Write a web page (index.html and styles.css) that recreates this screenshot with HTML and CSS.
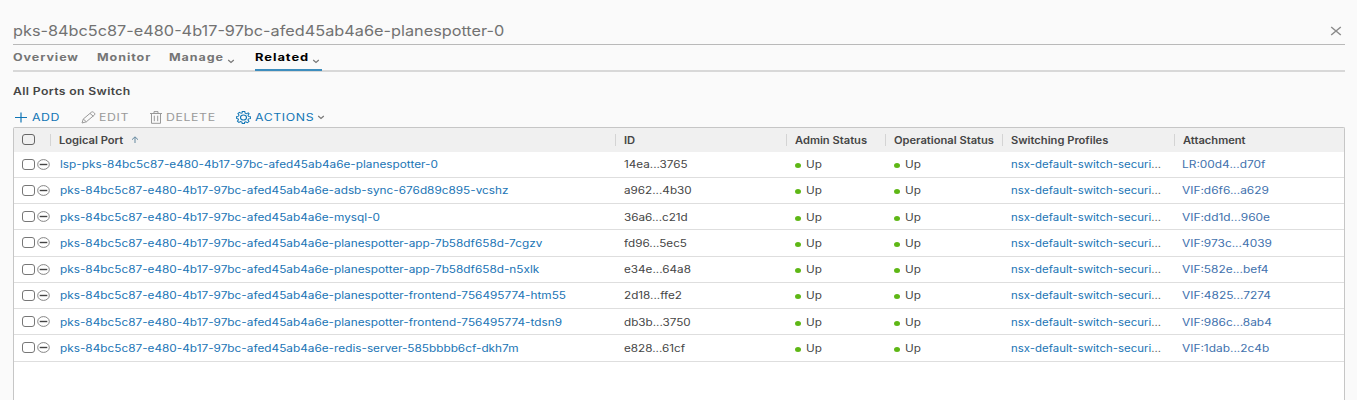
FILE: index.html
```
<!DOCTYPE html>
<html lang="en">
<head>
<meta charset="utf-8">
<title>Logical switch ports</title>
<link rel="stylesheet" href="styles.css">
</head>
<body>
<svg width="0" height="0" class="defs">
  <symbol id="minus" viewBox="0 0 13 11"><ellipse cx="6.5" cy="5.5" rx="5.8" ry="4.9" fill="#fff" stroke="#777" stroke-width=".9"/><path d="M2.7 5.5h7.6" stroke="#444" stroke-width="1.4"/></symbol>
  <symbol id="caret" viewBox="0 0 8 5"><path d="M1.200 1l2.800 2.500L6.800 1" fill="none" stroke="currentColor" stroke-width="1.2"/></symbol>
</svg>
<main class="page">
  <header class="title-bar">
    <h1 class="title"><span class="t">pks-84bc5c87-e480-4b17-97bc-afed45ab4a6e-planespotter-0</span></h1>
    <svg class="close" viewBox="0 0 12 10"><path d="M1.200 1l9.600 8M10.800 1L1.200 9" stroke="#8c8c8c" stroke-width="1.5"/></svg>
  </header>
  <nav class="tabs">
    <a class="tab overview"><span class="t">Overview</span></a>
    <a class="tab monitor"><span class="t">Monitor</span></a>
    <a class="tab manage"><span class="t">Manage</span><svg class="caret"><use href="#caret"/></svg></a>
    <a class="tab related"><span class="t">Related</span><svg class="caret"><use href="#caret"/></svg></a>
  </nav>
  <h2 class="section"><span class="t">All Ports on Switch</span></h2>
  <div class="toolbar">
    <a class="action add"><svg viewBox="0 0 12 10"><path d="M0 5h12M6 0v10" fill="none" stroke="currentColor" stroke-width="1.2"/></svg><span class="t">ADD</span></a>
    <a class="action edit off"><svg viewBox="0 0 15 13"><path d="M1 12l1.3-4L10.4 1.2Q11.4.4 12.5 1.3l1 .8q1 .9 0 1.8L5.3 10.8zM9 2.4l3.3 2.9M2.3 8l3 2.8" fill="none" stroke="currentColor"/></svg><span class="t">EDIT</span></a>
    <a class="action delete off"><svg viewBox="0 0 12 13"><path d="M0 2.5h12M4 2.3V.6h4v1.7M1.5 2.5v9.8h9V2.5M4.3 4.7v5.5M7.7 4.7v5.5" fill="none" stroke="currentColor"/></svg><span class="t">DELETE</span></a>
    <a class="action more"><svg viewBox="0 0 24 24" preserveAspectRatio="none"><path d="M10 1h4l.7 3.2 2 .9L19.500 3.300l1.500 2-1.800 2.700.8 2L23 10.500v3.500l-3 .6-.9 2 1.700 2.800-2.500 2.300-2.700-1.800-2 .8L13.500 23h-3.500l-.6-2.600-2-.8-2.800 1.600-2.300-2.400 1.600-2.600-.8-2L1 13.700v-3.400l2.900-.7.9-2-1.700-2.700 2.400-2.300 2.700 1.700 1.600-.7z" fill="none" stroke="currentColor" stroke-width="1.700"/><circle cx="12" cy="12" r="4.800" fill="none" stroke="currentColor" stroke-width="1.800"/></svg><span class="t">ACTIONS</span><svg class="caret"><use href="#caret"/></svg></a>
  </div>
  <section class="grid">
    <div class="row head">
      <div class="cell select"><i class="box"></i></div>
      <div class="cell port"><span class="t">Logical Port</span><svg class="sort" viewBox="0 0 8 7"><path d="M4 7V1M1 3.700L4 .8l3 2.900" fill="none" stroke="#64889f"/></svg></div>
      <div class="cell"><span class="t">ID</span></div>
      <div class="cell"><span class="t">Admin Status</span></div>
      <div class="cell"><span class="t">Operational Status</span></div>
      <div class="cell"><span class="t">Switching Profiles</span></div>
      <div class="cell"><span class="t">Attachment</span></div>
    </div>
    <div class="row"><div class="cell select"><i class="box"></i><svg class="minus"><use href="#minus"/></svg></div><div class="cell link name"><span class="t">lsp-pks-84bc5c87-e480-4b17-97bc-afed45ab4a6e-planespotter-0</span></div><div class="cell"><span class="t">14ea...3765</span></div><div class="cell up"><span class="t">Up</span></div><div class="cell up"><span class="t">Up</span></div><div class="cell link profile"><span class="t">nsx-default-switch-securi<b>...</b></span></div><div class="cell link att"><span class="t">LR:00d4...d70f</span></div></div>
    <div class="row"><div class="cell select"><i class="box"></i><svg class="minus"><use href="#minus"/></svg></div><div class="cell link name"><span class="t">pks-84bc5c87-e480-4b17-97bc-afed45ab4a6e-adsb-sync-676d89c895-vcshz</span></div><div class="cell"><span class="t">a962...4b30</span></div><div class="cell up"><span class="t">Up</span></div><div class="cell up"><span class="t">Up</span></div><div class="cell link profile"><span class="t">nsx-default-switch-securi<b>...</b></span></div><div class="cell link att"><span class="t">VIF:d6f6...a629</span></div></div>
    <div class="row"><div class="cell select"><i class="box"></i><svg class="minus"><use href="#minus"/></svg></div><div class="cell link name"><span class="t">pks-84bc5c87-e480-4b17-97bc-afed45ab4a6e-mysql-0</span></div><div class="cell"><span class="t">36a6...c21d</span></div><div class="cell up"><span class="t">Up</span></div><div class="cell up"><span class="t">Up</span></div><div class="cell link profile"><span class="t">nsx-default-switch-securi<b>...</b></span></div><div class="cell link att"><span class="t">VIF:dd1d...960e</span></div></div>
    <div class="row"><div class="cell select"><i class="box"></i><svg class="minus"><use href="#minus"/></svg></div><div class="cell link name"><span class="t">pks-84bc5c87-e480-4b17-97bc-afed45ab4a6e-planespotter-app-7b58df658d-7cgzv</span></div><div class="cell"><span class="t">fd96...5ec5</span></div><div class="cell up"><span class="t">Up</span></div><div class="cell up"><span class="t">Up</span></div><div class="cell link profile"><span class="t">nsx-default-switch-securi<b>...</b></span></div><div class="cell link att"><span class="t">VIF:973c...4039</span></div></div>
    <div class="row"><div class="cell select"><i class="box"></i><svg class="minus"><use href="#minus"/></svg></div><div class="cell link name"><span class="t">pks-84bc5c87-e480-4b17-97bc-afed45ab4a6e-planespotter-app-7b58df658d-n5xlk</span></div><div class="cell"><span class="t">e34e...64a8</span></div><div class="cell up"><span class="t">Up</span></div><div class="cell up"><span class="t">Up</span></div><div class="cell link profile"><span class="t">nsx-default-switch-securi<b>...</b></span></div><div class="cell link att"><span class="t">VIF:582e...bef4</span></div></div>
    <div class="row"><div class="cell select"><i class="box"></i><svg class="minus"><use href="#minus"/></svg></div><div class="cell link name"><span class="t">pks-84bc5c87-e480-4b17-97bc-afed45ab4a6e-planespotter-frontend-756495774-htm55</span></div><div class="cell"><span class="t">2d18...ffe2</span></div><div class="cell up"><span class="t">Up</span></div><div class="cell up"><span class="t">Up</span></div><div class="cell link profile"><span class="t">nsx-default-switch-securi<b>...</b></span></div><div class="cell link att"><span class="t">VIF:4825...7274</span></div></div>
    <div class="row"><div class="cell select"><i class="box"></i><svg class="minus"><use href="#minus"/></svg></div><div class="cell link name"><span class="t">pks-84bc5c87-e480-4b17-97bc-afed45ab4a6e-planespotter-frontend-756495774-tdsn9</span></div><div class="cell"><span class="t">db3b...3750</span></div><div class="cell up"><span class="t">Up</span></div><div class="cell up"><span class="t">Up</span></div><div class="cell link profile"><span class="t">nsx-default-switch-securi<b>...</b></span></div><div class="cell link att"><span class="t">VIF:986c...8ab4</span></div></div>
    <div class="row"><div class="cell select"><i class="box"></i><svg class="minus"><use href="#minus"/></svg></div><div class="cell link name"><span class="t">pks-84bc5c87-e480-4b17-97bc-afed45ab4a6e-redis-server-585bbbb6cf-dkh7m</span></div><div class="cell"><span class="t">e828...61cf</span></div><div class="cell up"><span class="t">Up</span></div><div class="cell up"><span class="t">Up</span></div><div class="cell link profile"><span class="t">nsx-default-switch-securi<b>...</b></span></div><div class="cell link att"><span class="t">VIF:1dab...2c4b</span></div></div>
  </section>
</main>
</body>
</html>
```
FILE: styles.css
```
* { box-sizing: border-box; }
html, body { margin: 0; height: 400px; overflow: hidden; background: #fafafa; }
body { font: 10px/14px Inter, "Open Sans", sans-serif; color: #454545; }
.defs { display: block; }
.page { display: flex; flex-direction: column; height: 400px; padding: 17px 12px 0 13px; }
/* Wide letterforms: glyphs are stretched horizontally by --wide. */
.t { display: inline-block; white-space: nowrap; transform: scaleX(var(--wide, 1.1)); transform-origin: 0 50%; }
.title-bar { display: flex; justify-content: space-between; align-items: center; height: 28px; flex: none; border-bottom: 1px solid #b9b9b9; padding-right: 3px; }
.title { margin: 0; font-size: 14.5px; line-height: 20px; font-weight: 400; color: #727272; --wide: 1.1225; }
.close { width: 12px; height: 10px; }
.tabs { display: flex; height: 27px; flex: none; border-bottom: 2px solid #d8d8d8; }
.tab { display: flex; flex: none; height: 26px; padding-top: 4.5px; font-weight: 700; color: #757575; letter-spacing: .75px; --wide: 1.25; }
.tab .t { flex: 1; min-width: 0; width: 0; }
.overview { width: 84px; }
.monitor { width: 72px; }
.manage { width: 66px; margin-right: 20px; }
.related { width: 67px; color: #000; border-bottom: 2px solid #3d8dbd; --wide: 1.29; }
.caret { width: 8px; height: 5px; color: #777; flex: none; }
.tab .caret { margin-top: 9.500px; margin-right: 2px; }
.tab.manage .caret { margin-right: 0; }
.section { margin: 12px 0 0; font-size: 10px; line-height: 14px; font-weight: 600; letter-spacing: .3px; --wide: 1.22; }
.toolbar { display: flex; height: 20px; margin-top: 9px; flex: none; align-items: center; color: #0f75b5; }
.action { display: flex; align-items: center; flex: none; letter-spacing: .5px; --wide: 1.23; }
.off { color: #999; }
.add { width: 68px; padding-left: 2px; gap: 5px; }
.edit { width: 68px; gap: 3px; }
.delete { width: 87px; padding-left: 1px; gap: 4px; }
.more { gap: 4px; }
.action > svg:first-child { width: 12px; height: 11px; flex: none; }
.edit > svg:first-child { width: 15px; height: 13px; }
.delete > svg:first-child { height: 13px; }
.more > svg:first-child { width: 15px; height: 13px; }
.more .t { width: 58px; }
.grid { flex: 1; border: 1px solid #c6c6c6; border-bottom: 0; border-radius: 2px 2px 0 0; background: #fff; }
.row { display: grid; grid-template-columns: 36px 565px 171px 99px 117px 172px 1fr; height: 26.25px; border-bottom: 1px solid #dedede; }
.head { height: 23.500px; background: #f0f0f0; border: 0; font-weight: 600; }
.cell { display: flex; align-items: center; padding-left: 9px; min-width: 0; --wide: 1.17; }
.head .cell { position: relative; --wide: 1.115; }
.head .cell + .cell::before { content: ""; width: 1px; height: 12px; background: #d4d4d4; margin: 0 8px 0 -9px; }
.cell.select { gap: 2px; padding-left: 8px; }
.box { width: 13px; height: 11px; flex: none; border: 1px solid #777; border-radius: 3px; background: #fff; }
.head .box { border: 1.500px solid #666; background: transparent; }
.head .select .box { margin-left: -.5px; }
.minus { width: 13px; height: 11px; flex: none; }
.sort { width: 8px; height: 7px; margin-left: 14px; }
.link { color: #1974b5; }
.link b { font-weight: 400; color: #555; }
.name { padding-left: 9.700px; --wide: 1.18; }
.profile { --wide: 1.143; }
.att { color: #4171ad; padding-left: 8px; --wide: 1.19; }
.up::before { content: ""; width: 6px; height: 5px; border-radius: 50%; background: #5eb715; margin: 3px 5px 0 0; }
```
